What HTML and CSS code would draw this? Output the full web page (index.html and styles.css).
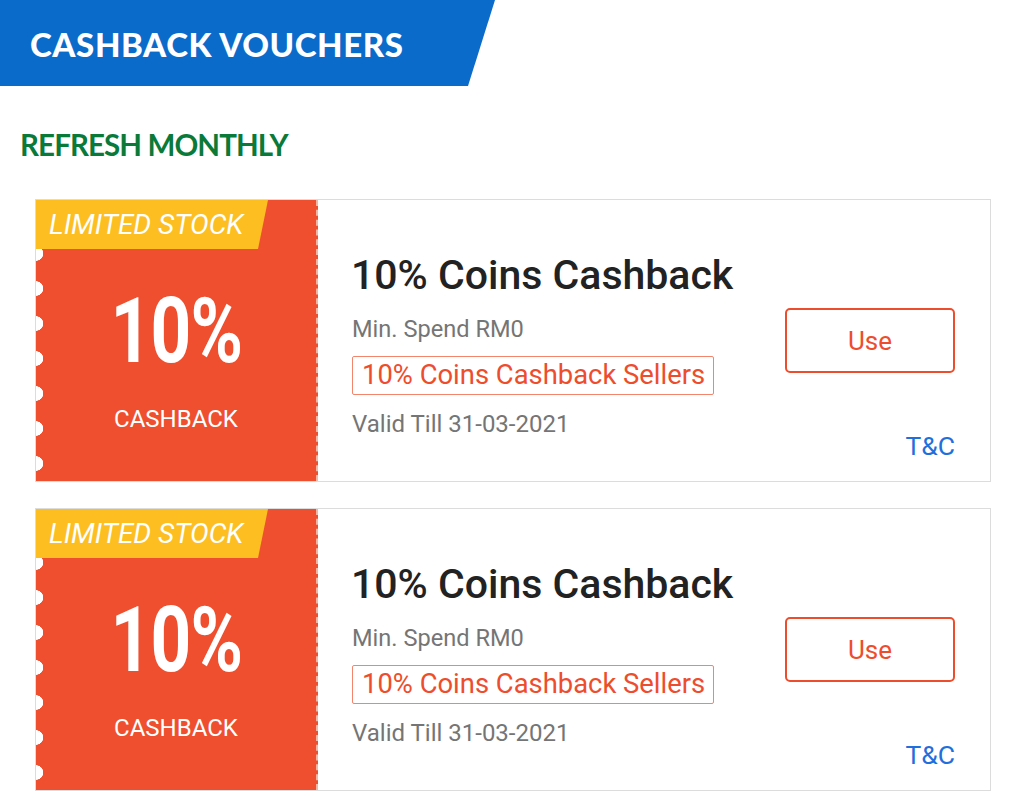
FILE: index.html
```html
<!DOCTYPE html>
<html lang="en">
<head>
<meta charset="utf-8">
<title>Cashback Vouchers</title>
<link rel="stylesheet" href="styles.css">
</head>
<body>
  <header class="banner">
    <h1 class="banner-title">CASHBACK VOUCHERS</h1>
  </header>
  <h2 class="section-title">REFRESH MONTHLY</h2>
  <div class="vouchers">
    <div class="voucher">
      <div class="stub">
        <div class="badge"><span class="badge-text">LIMITED STOCK</span></div>
        <div class="stub-value"><span class="stub-num">10%</span></div>
        <div class="stub-label">CASHBACK</div>
      </div>
      <div class="info">
        <div class="details">
          <div class="v-title">10% Coins Cashback</div>
          <div class="v-meta">Min. Spend RM0</div>
          <div class="v-tag">10% Coins Cashback Sellers</div>
          <div class="v-meta v-valid">Valid Till 31-03-2021</div>
        </div>
        <div class="actions">
          <button class="use-btn">Use</button>
          <a class="tnc" href="#">T&amp;C</a>
        </div>
      </div>
    </div>
    <div class="voucher">
      <div class="stub">
        <div class="badge"><span class="badge-text">LIMITED STOCK</span></div>
        <div class="stub-value"><span class="stub-num">10%</span></div>
        <div class="stub-label">CASHBACK</div>
      </div>
      <div class="info">
        <div class="details">
          <div class="v-title">10% Coins Cashback</div>
          <div class="v-meta">Min. Spend RM0</div>
          <div class="v-tag">10% Coins Cashback Sellers</div>
          <div class="v-meta v-valid">Valid Till 31-03-2021</div>
        </div>
        <div class="actions">
          <button class="use-btn">Use</button>
          <a class="tnc" href="#">T&amp;C</a>
        </div>
      </div>
    </div>
  </div>
</body>
</html>
```
FILE: styles.css
```css
* { box-sizing: border-box; }
html, body { margin: 0; padding: 0; background: #fff; }
body {
  font-family: Roboto, "Liberation Sans", Arial, sans-serif;
  overflow: hidden;
}

.banner {
  width: 495px;
  height: 86px;
  background: #0a6bcb;
  clip-path: polygon(0 0, 495px 0, 468px 100%, 0 100%);
  display: flex;
  align-items: center;
  padding-left: 30px;
}
.banner-title {
  margin: 0;
  font-family: Lato, "Open Sans", sans-serif;
  font-weight: 900;
  font-size: 33px;
  line-height: 1;
  color: #fff;
  letter-spacing: 0.6px;
  padding-top: 3px;
}

.section-title {
  margin: 44px 0 0 20px;
  font-family: Lato, "Open Sans", sans-serif;
  font-weight: 700;
  font-size: 29.5px;
  line-height: 30px;
  color: #0a7a3a;
  letter-spacing: -0.9px;
}

.vouchers {
  margin: 39px 0 0 35px;
  width: 956px;
  display: flex;
  flex-direction: column;
  gap: 26px;
}

.voucher {
  height: 283px;
  border: 1px solid #dcdcdc;
  display: flex;
  background: #fff;
}

.stub {
  position: relative;
  width: 282px;
  flex: none;
  background:
    radial-gradient(circle at 0 50%, #fff 7px, transparent 7.5px) 0 1px / 16px 35px repeat-y,
    #ef4f2e;
  border-right: 2px dashed #f7b5a4;
  display: flex;
  flex-direction: column;
  align-items: center;
  color: #fff;
  padding-top: 89px;
}

.badge {
  position: absolute;
  left: 0;
  top: 0;
  width: 232px;
  height: 49px;
  background: #fdbe22;
  clip-path: polygon(0 0, 232px 0, 222px 100%, 0 100%);
  display: flex;
  align-items: center;
  padding-left: 13px;
}
.badge-text {
  font-style: italic;
  font-size: 28px;
  line-height: 1;
  color: #fff;
  white-space: nowrap;
}

.stub-value {
  line-height: 1;
  height: 86px;
  display: flex;
  justify-content: center;
}
.stub-num {
  display: inline-block;
  font-weight: 700;
  font-size: 90px;
  line-height: 86px;
  transform: scaleX(0.79);
  letter-spacing: -1px;
}
.stub-label {
  margin-top: 32px;
  font-size: 24px;
  line-height: 1;
}

.info {
  flex: 1;
  display: flex;
  justify-content: space-between;
  padding: 55px 35px 0 34px;
}

.details {
  display: flex;
  flex-direction: column;
  align-items: flex-start;
}
.v-title {
  font-weight: 500;
  font-size: 41px;
  line-height: 41px;
  color: #222;
  margin-left: -1px;
}
.v-meta {
  font-size: 23.6px;
  line-height: 24px;
  color: #757575;
  margin-top: 21px;
}
.v-tag {
  margin-top: 15px;
  border: 1px solid #f2856c;
  border-radius: 2px;
  padding: 0 8px 0 9px;
  font-size: 27.4px;
  line-height: 37px;
  color: #ee4d2d;
  white-space: nowrap;
}
.v-valid {
  margin-top: 17px;
  font-size: 24px;
}

.actions {
  display: flex;
  flex-direction: column;
  align-items: flex-end;
  padding-top: 53px;
}
.use-btn {
  width: 170px;
  height: 65px;
  border: 2px solid #ee4d2d;
  border-radius: 5px;
  background: #fff;
  color: #ee4d2d;
  font-family: Roboto, "Liberation Sans", sans-serif;
  font-size: 26px;
  padding: 0;
}
.tnc {
  margin-top: 60px;
  font-size: 26.5px;
  line-height: 1;
  color: #1f6fdc;
  text-decoration: none;
}
```
